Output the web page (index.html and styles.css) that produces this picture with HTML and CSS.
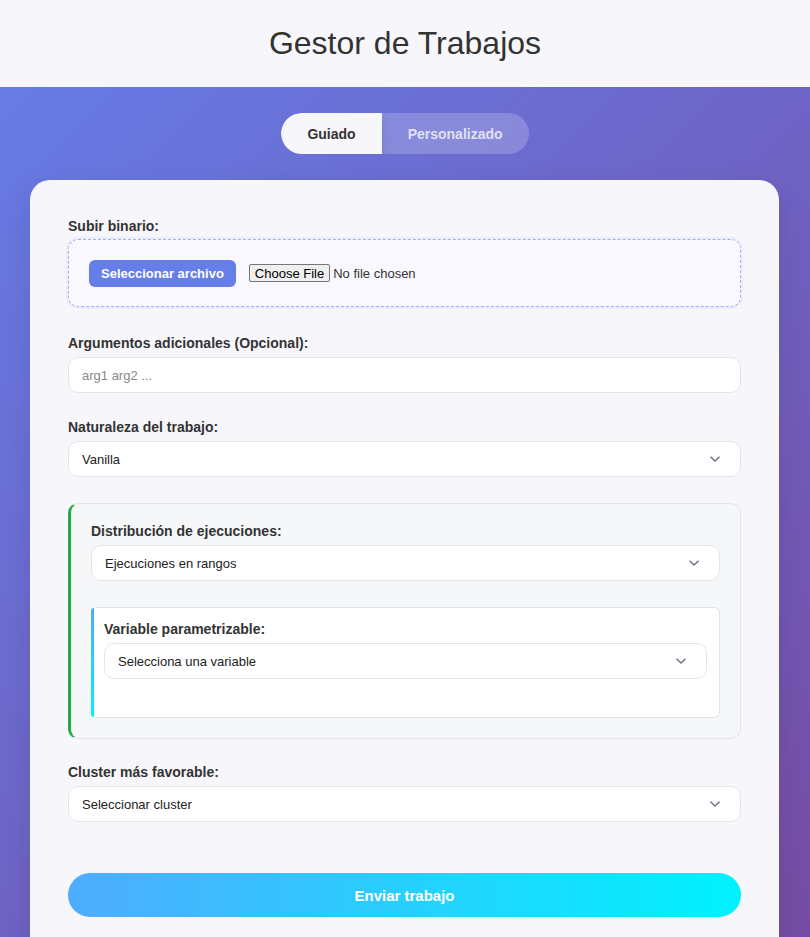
FILE: index.html
```html
<!DOCTYPE html>
<html lang="es">
<head>
<meta charset="utf-8">
<title>Gestor de Trabajos</title>
<link rel="stylesheet" href="styles.css">
</head>
<body>
<header class="header">
  <h1 class="title">Gestor de Trabajos</h1>
</header>
<main class="main">
  <nav class="tabs">
    <button class="tab tab-active">Guiado</button>
    <button class="tab">Personalizado</button>
  </nav>
  <section class="card">
    <div class="group group-upload">
      <label class="label">Subir binario:</label>
      <div class="upload">
        <button class="upload-btn">Seleccionar archivo</button>
        <input class="file" type="file">
      </div>
    </div>
    <div class="group">
      <label class="label">Argumentos adicionales (Opcional):</label>
      <input class="field" type="text" placeholder="arg1 arg2 ...">
    </div>
    <div class="group">
      <label class="label">Naturaleza del trabajo:</label>
      <div class="select-wrap">
        <select class="field select"><option>Vanilla</option></select>
        <svg class="chev" width="12" height="8" viewBox="0 0 12 8"><path d="M1.5 1.8 L6 6 L10.5 1.8" fill="none" stroke="#6b7280" stroke-width="1.5"/></svg>
      </div>
    </div>
    <div class="panel">
      <div class="group">
        <label class="label">Distribución de ejecuciones:</label>
        <div class="select-wrap">
          <select class="field select"><option>Ejecuciones en rangos</option></select>
          <svg class="chev" width="12" height="8" viewBox="0 0 12 8"><path d="M1.5 1.8 L6 6 L10.5 1.8" fill="none" stroke="#6b7280" stroke-width="1.5"/></svg>
        </div>
      </div>
      <div class="subpanel">
        <label class="label">Variable parametrizable:</label>
        <div class="select-wrap">
          <select class="field select"><option>Selecciona una variable</option></select>
          <svg class="chev" width="12" height="8" viewBox="0 0 12 8"><path d="M1.5 1.8 L6 6 L10.5 1.8" fill="none" stroke="#6b7280" stroke-width="1.5"/></svg>
        </div>
      </div>
    </div>
    <div class="group">
      <label class="label">Cluster más favorable:</label>
      <div class="select-wrap">
        <select class="field select"><option>Seleccionar cluster</option></select>
        <svg class="chev" width="12" height="8" viewBox="0 0 12 8"><path d="M1.5 1.8 L6 6 L10.5 1.8" fill="none" stroke="#6b7280" stroke-width="1.5"/></svg>
      </div>
    </div>
    <button class="submit">Enviar trabajo</button>
  </section>
</main>
</body>
</html>
```
FILE: styles.css
```css
* { box-sizing: border-box; }
html, body { margin: 0; padding: 0; }
body {
  font-family: "Liberation Sans", Arial, sans-serif;
  color: #333;
  background: linear-gradient(135deg, #667eea 0%, #764ba2 100%);
  min-height: 937px;
  overflow: hidden;
}
.header {
  height: 87px;
  background: #f7f7fb;
  display: flex;
  align-items: center;
  justify-content: center;
}
.title {
  margin: 0;
  font-size: 32px;
  font-weight: 400;
  color: #333;
}
.main {
  padding: 26px 30px 0 30px;
  display: flex;
  flex-direction: column;
  align-items: center;
}
.tabs {
  display: flex;
  border-radius: 22px;
  overflow: hidden;
  background: rgba(255,255,255,0.2);
  margin-bottom: 26px;
}
.tab {
  border: 0;
  background: transparent;
  font-family: inherit;
  font-size: 14px;
  font-weight: 700;
  padding: 12px 26px;
  height: 41px;
  color: rgba(255,255,255,0.75);
  border-radius: 0;
}
.tab-active {
  background: #f7f7fb;
  color: #333;
  border-radius: 22px 0 0 22px;
  box-shadow: 0 4px 12px rgba(0,0,0,0.12);
}
.card {
  align-self: flex-start;
  width: 749px;
  background: #f7f7fb;
  border-radius: 20px;
  padding: 38px 38px 60px 38px;
  box-shadow: 0 10px 30px rgba(0,0,0,0.1);
}
.group { margin-bottom: 26px; }
.group-upload { margin-bottom: 28px; }
.label {
  display: block;
  font-size: 14px;
  font-weight: 700;
  color: #333;
  line-height: 16px;
  margin-bottom: 6px;
}
.upload {
  height: 68px;
  margin-top: -1px;
  border: 1px dashed #a3aef2;
  border-radius: 10px;
  background: #f8f8fe;
  box-shadow: 0 0 0 2px rgba(102,126,234,0.08);
  padding: 0 20px;
  display: flex;
  align-items: center;
  gap: 13px;
}
.upload-btn {
  border: 0;
  background: #667eea;
  color: #fff;
  font-family: inherit;
  font-size: 13px;
  font-weight: 700;
  height: 27px;
  padding: 0 12px;
  border-radius: 6px;
}
.file {
  font-family: "Liberation Sans", Arial, sans-serif;
  font-size: 13px;
  color: #333;
}
.file::file-selector-button {
  font-family: "Liberation Sans", Arial, sans-serif;
  font-size: 13px;
  height: 18px;
  padding: 0 5px;
  margin-right: 3px;
  border: 1px solid #767676;
  border-radius: 2px;
  background: #efefef;
  color: #000;
}
.field {
  display: block;
  width: 100%;
  height: 36px;
  border: 1px solid #e4e6ec;
  border-radius: 10px;
  background: #fff;
  font-family: inherit;
  font-size: 13px;
  color: #222;
  padding: 0 13px;
  outline: none;
}
.field::placeholder { color: #8a8a8a; }
.select-wrap { position: relative; }
.select {
  appearance: none;
  -webkit-appearance: none;
}
.chev {
  position: absolute;
  right: 20px;
  top: 14px;
  pointer-events: none;
}
.panel {
  border: 1px solid #e4e6ea;
  border-left: 3px solid #28a745;
  border-radius: 10px;
  background: #f6f7f9;
  padding: 19px 20px 20px 20px;
  margin-bottom: 25px;
}
.panel .group { margin-bottom: 26px; }
.subpanel {
  position: relative;
  background: #fff;
  border: 1px solid #dee2e6;
  border-left: 0;
  border-radius: 6px;
  padding: 13px 12px 38px 13px;
}
.subpanel::before {
  content: "";
  position: absolute;
  left: 0;
  top: 0;
  bottom: 0;
  width: 3px;
  border-radius: 6px 0 0 6px;
  background: linear-gradient(180deg, #4facfe, #00f2fe);
}
.submit {
  display: block;
  width: 100%;
  height: 44px;
  margin-top: 51px;
  border: 0;
  border-radius: 22px;
  background: linear-gradient(90deg, #4facfe 0%, #00f2fe 100%);
  color: #fff;
  font-family: inherit;
  font-size: 15px;
  font-weight: 700;
}
```
